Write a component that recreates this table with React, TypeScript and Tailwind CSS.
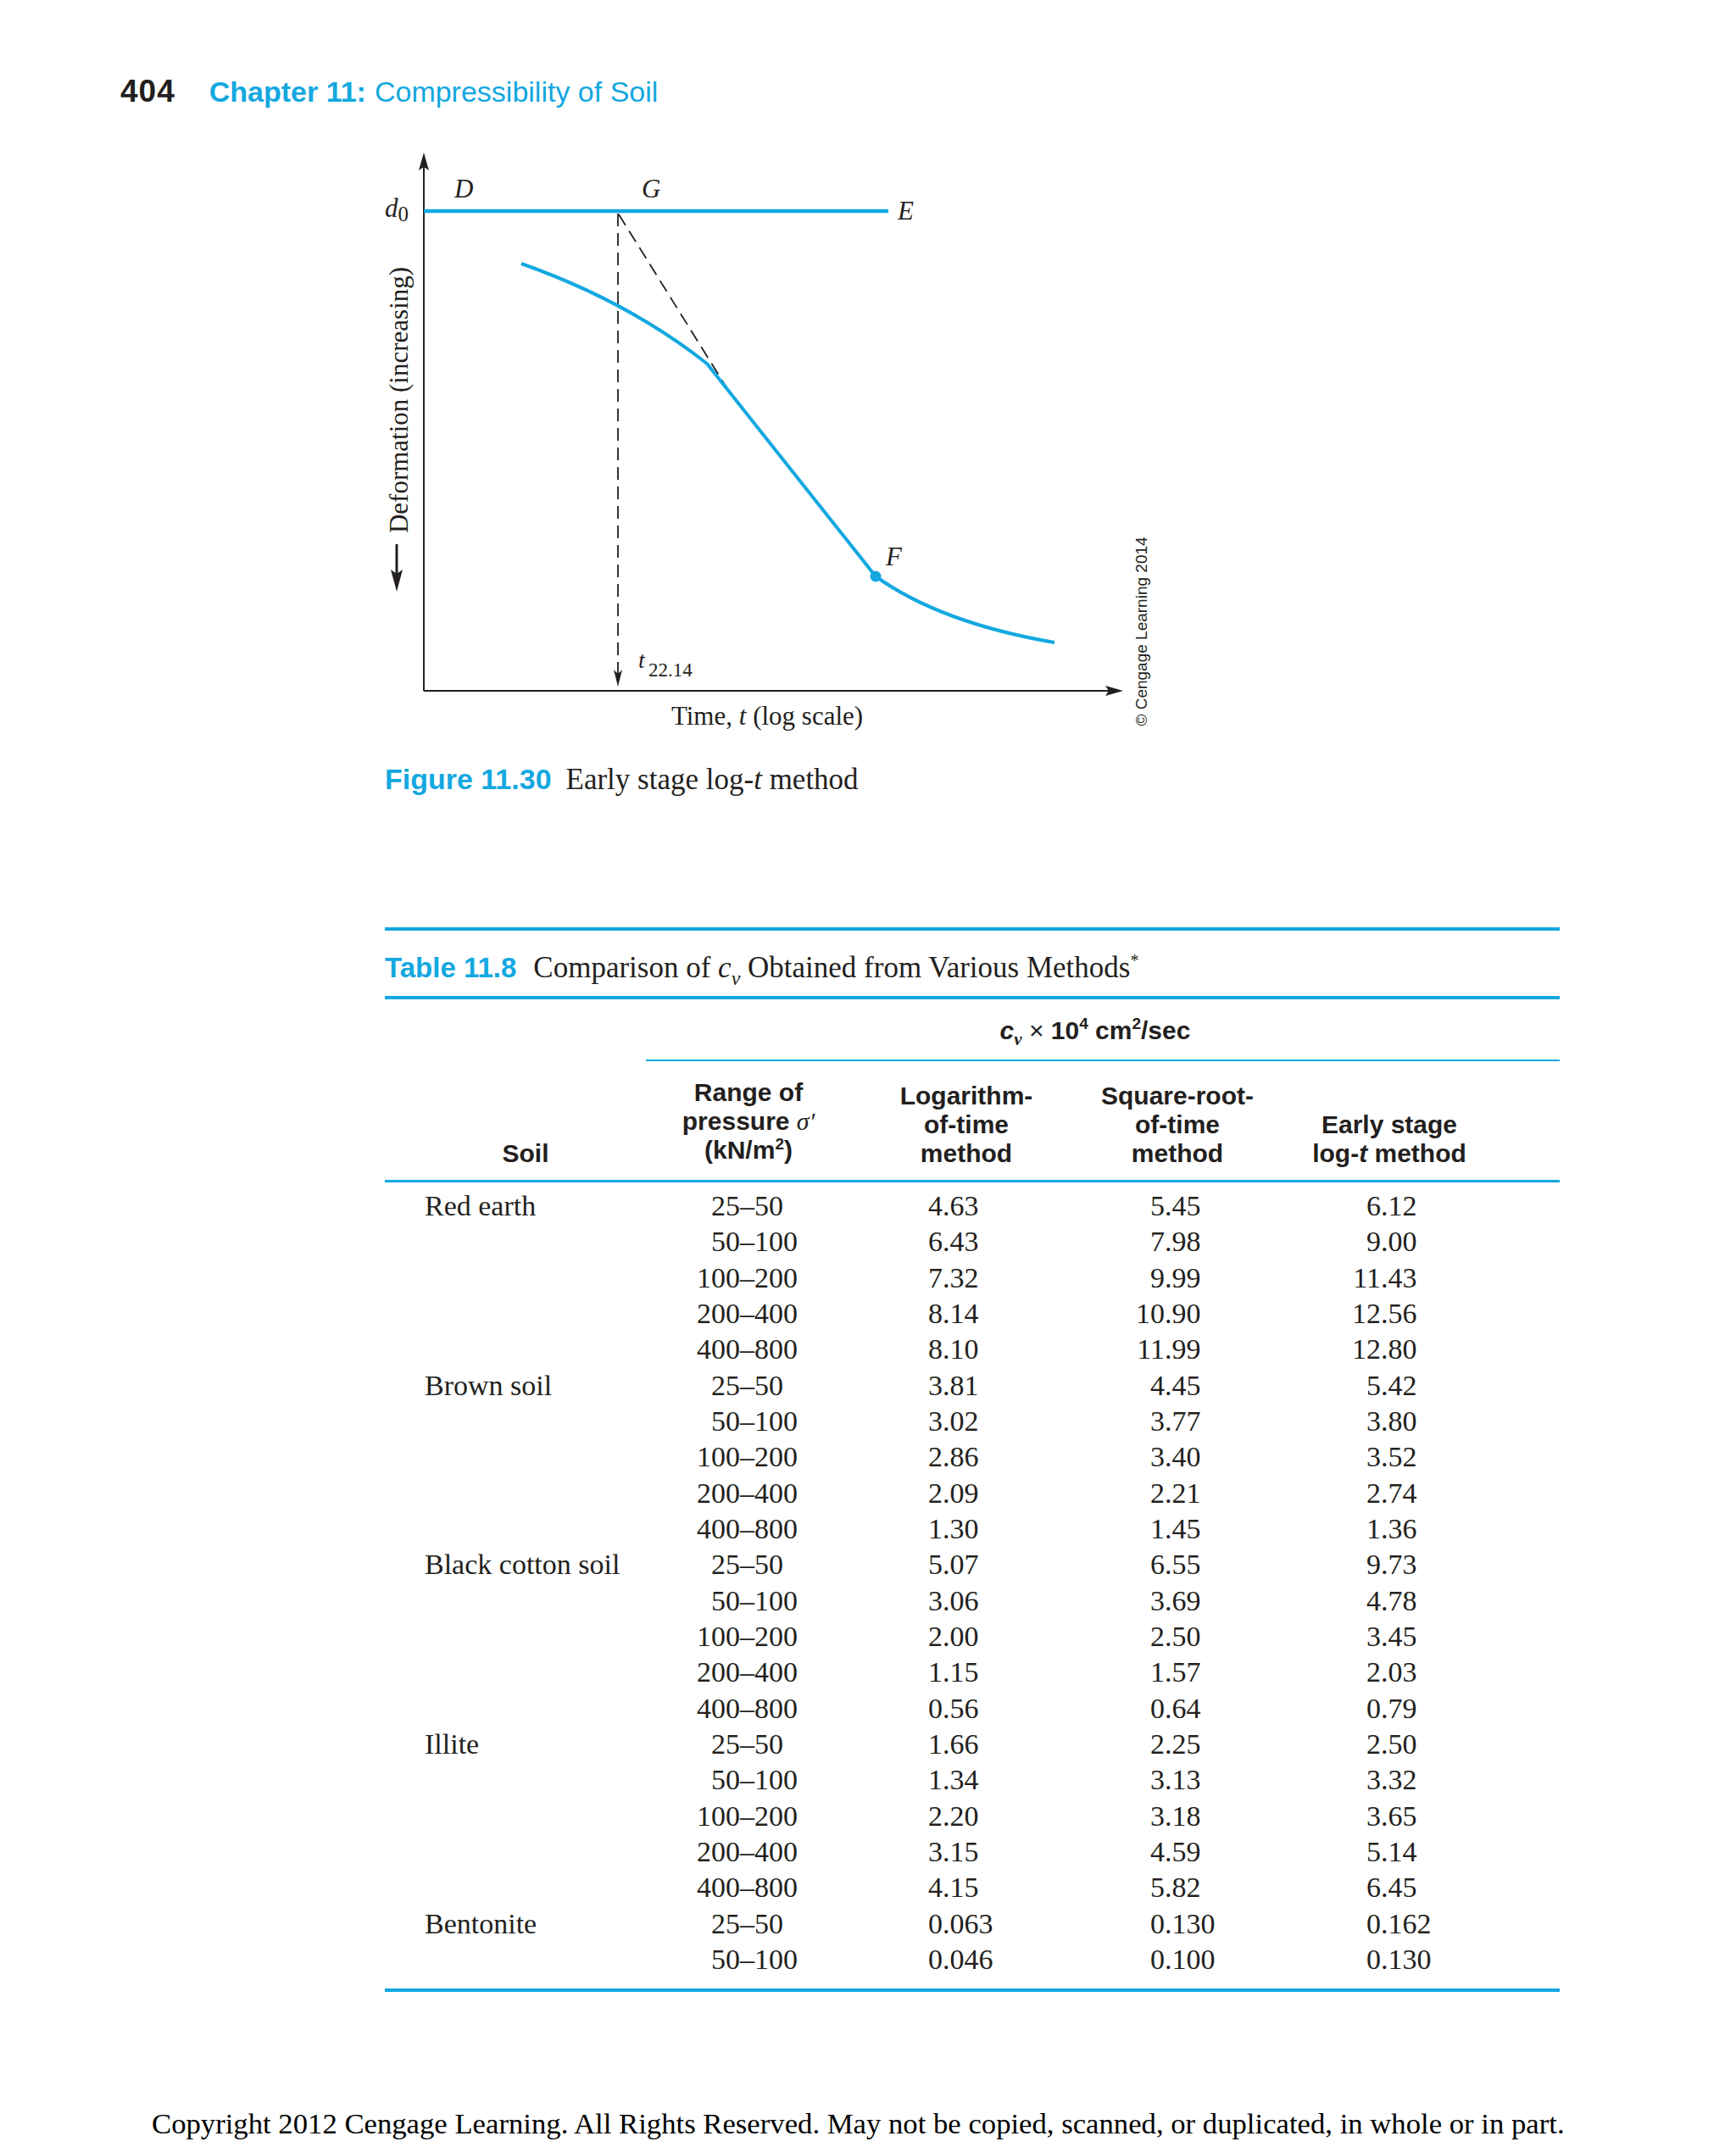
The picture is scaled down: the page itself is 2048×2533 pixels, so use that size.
import React from "react";

const BLUE = "#13a8e0";

type Row = { soil?: string; r: string; l: string; s: string; e: string };

const data: Row[] = [
  { soil: "Red earth", r: "25–50", l: "4.63", s: "5.45", e: "6.12" },
  { r: "50–100", l: "6.43", s: "7.98", e: "9.00" },
  { r: "100–200", l: "7.32", s: "9.99", e: "11.43" },
  { r: "200–400", l: "8.14", s: "10.90", e: "12.56" },
  { r: "400–800", l: "8.10", s: "11.99", e: "12.80" },
  { soil: "Brown soil", r: "25–50", l: "3.81", s: "4.45", e: "5.42" },
  { r: "50–100", l: "3.02", s: "3.77", e: "3.80" },
  { r: "100–200", l: "2.86", s: "3.40", e: "3.52" },
  { r: "200–400", l: "2.09", s: "2.21", e: "2.74" },
  { r: "400–800", l: "1.30", s: "1.45", e: "1.36" },
  { soil: "Black cotton soil", r: "25–50", l: "5.07", s: "6.55", e: "9.73" },
  { r: "50–100", l: "3.06", s: "3.69", e: "4.78" },
  { r: "100–200", l: "2.00", s: "2.50", e: "3.45" },
  { r: "200–400", l: "1.15", s: "1.57", e: "2.03" },
  { r: "400–800", l: "0.56", s: "0.64", e: "0.79" },
  { soil: "Illite", r: "25–50", l: "1.66", s: "2.25", e: "2.50" },
  { r: "50–100", l: "1.34", s: "3.13", e: "3.32" },
  { r: "100–200", l: "2.20", s: "3.18", e: "3.65" },
  { r: "200–400", l: "3.15", s: "4.59", e: "5.14" },
  { r: "400–800", l: "4.15", s: "5.82", e: "6.45" },
  { soil: "Bentonite", r: "25–50", l: "0.063", s: "0.130", e: "0.162" },
  { r: "50–100", l: "0.046", s: "0.100", e: "0.130" },
];

function Figure() {
  const ink = "#231f20";
  const serif = "'Liberation Serif', 'Times New Roman', serif";
  const sans = "'Liberation Sans', Arial, sans-serif";
  return (
    <svg
      width={950}
      height={700}
      viewBox="430 170 950 700"
      className="block ml-[430px]"
    >
      {/* axes */}
      <line x1={500} y1={815} x2={500} y2={192} stroke={ink} strokeWidth={2} />
      <path d="M500 180 L506 201 L500 197 L494 201 Z" fill={ink} />
      <line x1={500} y1={815} x2={1312} y2={815} stroke={ink} strokeWidth={2} />
      <path d="M1325 815 L1304 809 L1308 815 L1304 821 Z" fill={ink} />

      {/* d0 line */}
      <line x1={500} y1={249} x2={1048} y2={249} stroke={BLUE} strokeWidth={4.5} />

      {/* dashed lines */}
      <line x1={729} y1={252} x2={729} y2={795} stroke={ink} strokeWidth={1.8} strokeDasharray="15 8" />
      <path d="M729 810 L724 790 L729 795 L734 790 Z" fill={ink} />
      <line x1={730} y1={253} x2={857} y2={457} stroke={ink} strokeWidth={1.8} strokeDasharray="15 8" />

      {/* curve */}
      <path
        d="M615 311 Q 740 355 834 429 L 1033 680 Q 1110 735 1244 758"
        fill="none"
        stroke={BLUE}
        strokeWidth={4}
      />
      <circle cx={1033} cy={680} r={6.5} fill={BLUE} />

      {/* labels */}
      <g fontFamily={serif} fill={ink} fontSize={31}>
        <text x={536} y={233} fontStyle="italic">D</text>
        <text x={757} y={233} fontStyle="italic">G</text>
        <text x={1059} y={259} fontStyle="italic">E</text>
        <text x={1045} y={667} fontStyle="italic">F</text>
        <text x={454} y={256}>
          <tspan fontStyle="italic">d</tspan>
          <tspan fontSize={25} dy={5}>0</tspan>
        </text>
        <text x={753} y={788} fontSize={28} fontStyle="italic">t</text>
        <text x={765} y={798} fontSize={23}>22.14</text>
        <text x={905} y={855} textAnchor="middle">
          Time, <tspan fontStyle="italic">t</tspan> (log scale)
        </text>
        <text x={470} y={483} textAnchor="middle" transform="rotate(-90 470 472)">
          Deformation (increasing)
        </text>
      </g>
      {/* down arrow near y label */}
      <line x1={468} y1={642} x2={468} y2={680} stroke={ink} strokeWidth={3} />
      <path d="M468 698 L461 672 L468 677 L475 672 Z" fill={ink} />

      <text
        x={1346}
        y={752}
        textAnchor="middle"
        fontFamily={sans}
        fontSize={19}
        fill={ink}
        transform="rotate(-90 1346 745)"
      >
        © Cengage Learning 2014
      </text>
    </svg>
  );
}

function HeaderCell({ className, children }: { className: string; children: React.ReactNode }) {
  return (
    <div className={"flex flex-col items-center justify-end h-[102px] whitespace-nowrap " + className}>
      {children}
    </div>
  );
}

function DataRow({ row }: { row: Row }) {
  const [rl, rr] = row.r.split("–");
  const [li, ld] = row.l.split(".");
  const [si, sd] = row.s.split(".");
  const [ei, ed] = row.e.split(".");
  return (
    <div className="flex h-[42.33px] leading-[42.33px] whitespace-nowrap">
      <div className="w-[326px] pl-[47px]">{row.soil ?? ""}</div>
      <div className="w-[93px] text-right">{rl}</div>
      <div className="w-[189px]">–{rr}</div>
      <div className="w-[50px] text-right">{li}</div>
      <div className="w-[212px]">.{ld}</div>
      <div className="w-[50px] text-right">{si}</div>
      <div className="w-[205px]">.{sd}</div>
      <div className="w-[50px] text-right">{ei}</div>
      <div>.{ed}</div>
    </div>
  );
}

export default function App() {
  return (
    <div className="w-[2048px] h-[2533px] bg-white text-[#231f20] font-['Liberation_Serif',serif] overflow-hidden">
      {/* running head */}
      <div className="h-[170px] pt-[89px] pl-[142px] flex items-baseline leading-none font-['Liberation_Sans',Arial,sans-serif]">
        <span className="text-[37px] font-bold tracking-[1px] text-[#231f20]">404</span>
        <span className="ml-[40px] text-[34px] font-bold text-[#13a8e0]">Chapter 11:</span>
        <span className="ml-[10px] text-[34px] text-[#13a8e0]">Compressibility of Soil</span>
      </div>

      <Figure />

      {/* figure caption */}
      <div className="mt-[29px] pl-[454px] flex items-baseline leading-[40px] whitespace-nowrap">
        <span className="font-['Liberation_Sans',Arial,sans-serif] font-bold text-[34px] text-[#13a8e0]">Figure 11.30</span>
        <span className="ml-[17px] text-[35px]">
          Early stage log-<i>t</i> method
        </span>
      </div>

      {/* table */}
      <div className="mt-[154px] ml-[454px] w-[1386px]">
        <div className="h-[4px] bg-[#13a8e0]" />
        <div className="pt-[26px] pb-[11px] flex items-baseline leading-[35px] whitespace-nowrap">
          <span className="font-['Liberation_Sans',Arial,sans-serif] font-bold text-[33px] text-[#13a8e0]">Table 11.8</span>
          <span className="ml-[20px] text-[35px]">
            Comparison of <i>c</i>
            <i className="relative top-[9px] text-[24px]">v</i> Obtained from Various Methods
            <span className="relative -top-[13px] text-[20px]">*</span>
          </span>
        </div>
        <div className="h-[4px] bg-[#13a8e0]" />

        <div className="font-['Liberation_Sans',Arial,sans-serif] font-bold text-[30px]">
          <div className="ml-[308px] pt-[22px] pb-[15px] leading-[30px] flex justify-center pr-[18px] whitespace-nowrap">
            <span>
              <i>c</i>
              <i className="relative top-[7px] text-[21px] font-['Liberation_Serif',serif]">v</i>
              <span className="font-normal"> × </span>10
              <span className="relative -top-[12px] text-[19px]">4</span> cm
              <span className="relative -top-[12px] text-[19px]">2</span>/sec
            </span>
          </div>
          <div className="ml-[308px] h-[2px] bg-[#13a8e0]" />

          <div className="flex pt-[24px] pb-[14px] leading-[34px]">
            <HeaderCell className="w-[332px]">
              <span>Soil</span>
            </HeaderCell>
            <HeaderCell className="w-[194px]">
              <span>Range of</span>
              <span>
                pressure <i className="font-['Liberation_Serif',serif] font-normal">σ′</i>
              </span>
              <span>
                (kN/m<span className="relative -top-[11px] text-[19px]">2</span>)
              </span>
            </HeaderCell>
            <HeaderCell className="w-[320px]">
              <span>Logarithm-</span>
              <span>of-time</span>
              <span>method</span>
            </HeaderCell>
            <HeaderCell className="w-[178px]">
              <span>Square-root-</span>
              <span>of-time</span>
              <span>method</span>
            </HeaderCell>
            <HeaderCell className="w-[322px]">
              <span>Early stage</span>
              <span>
                log-<i>t</i> method
              </span>
            </HeaderCell>
          </div>
        </div>
        <div className="h-[3px] bg-[#13a8e0]" />

        <div className="pt-[7px] pb-[13px] text-[34px]">
          {data.map((row, i) => (
            <DataRow key={i} row={row} />
          ))}
        </div>
        <div className="h-[4px] bg-[#13a8e0]" />
      </div>

      {/* footer */}
      <div className="mt-[136px] pl-[179px] text-[34.7px] leading-[40px] whitespace-nowrap text-black">
        Copyright 2012 Cengage Learning. All Rights Reserved. May not be copied, scanned, or duplicated, in whole or in part.
      </div>
    </div>
  );
}
